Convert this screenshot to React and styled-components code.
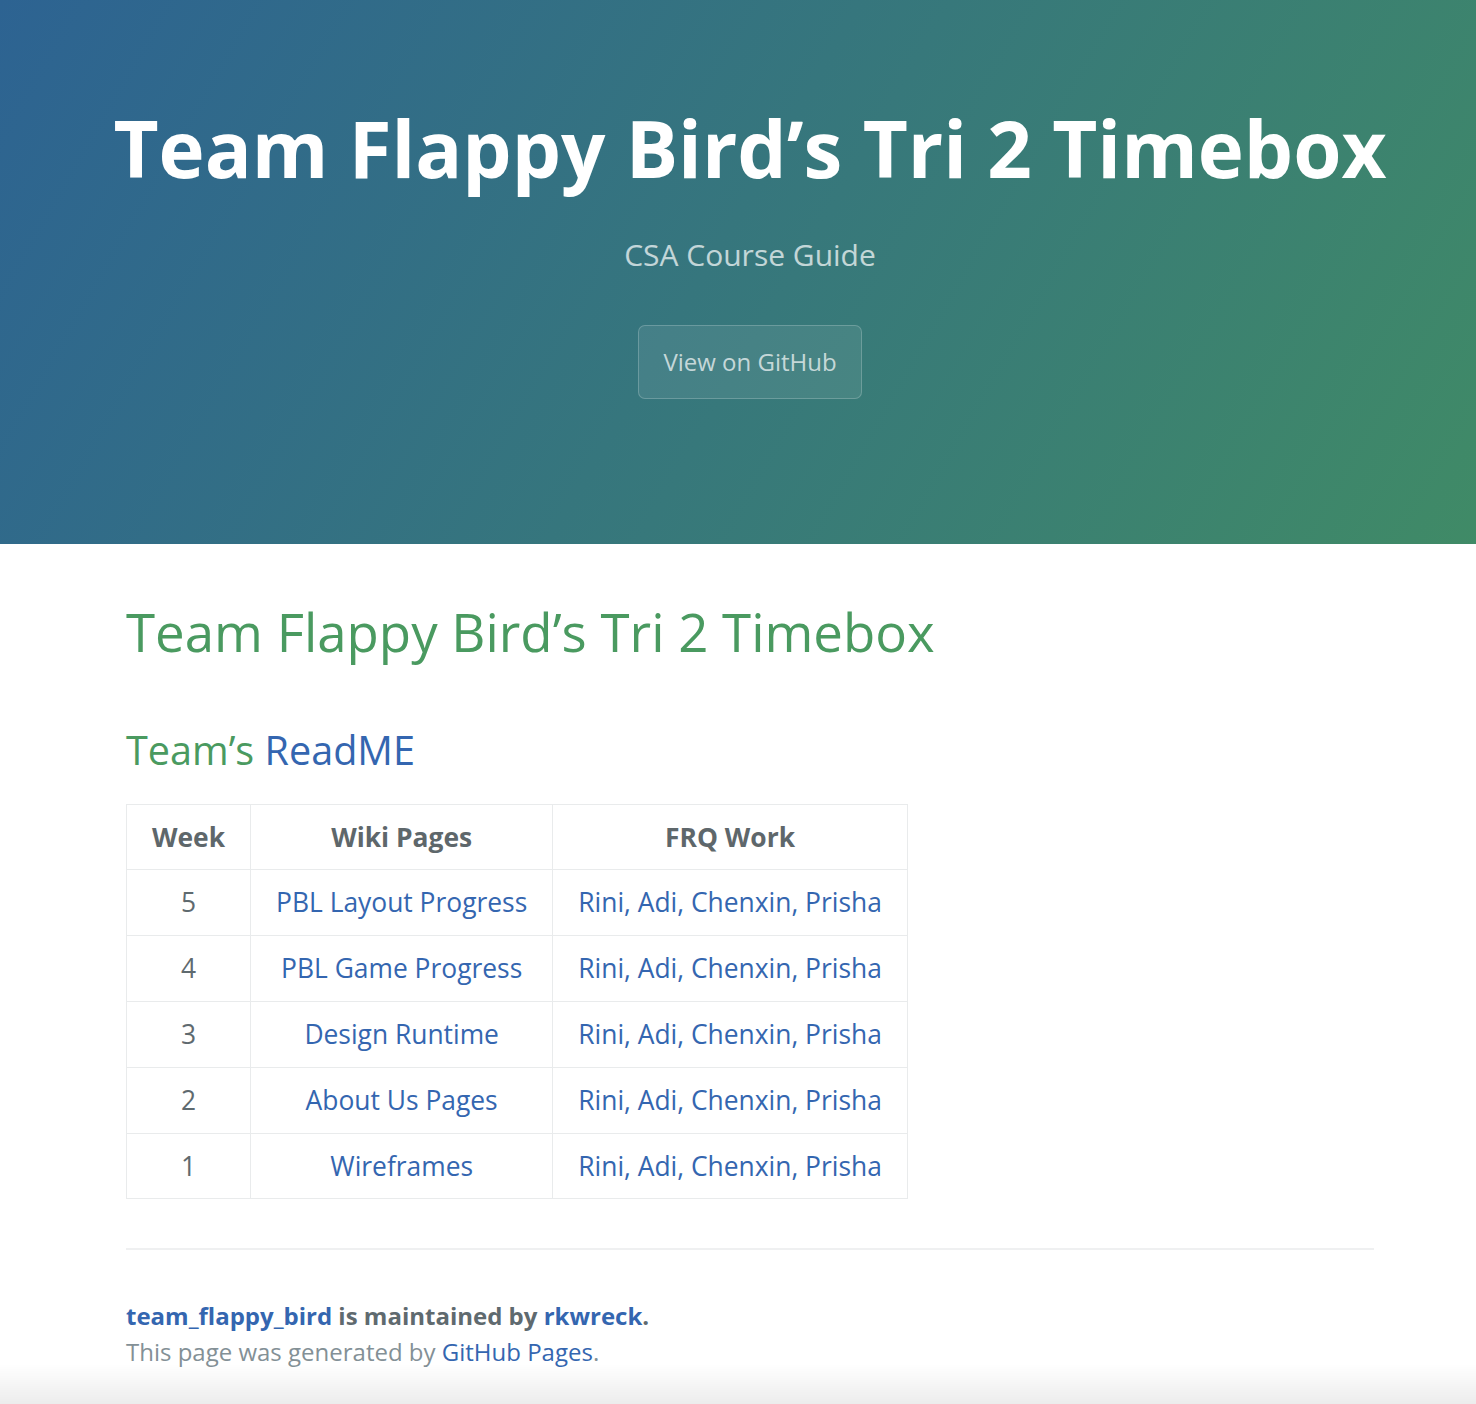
import styled, { createGlobalStyle } from "styled-components";

const GlobalStyle = createGlobalStyle`
  html, body {
    margin: 0;
    padding: 0;
    overflow-x: hidden;
  }
  body {
    font-family: "Open Sans", "Helvetica Neue", Helvetica, Arial, sans-serif;
    line-height: 1.5;
    color: #5f6a6f;
    background: #fff;
  }
`;

const Page = styled.div`
  width: 1500px;
`;

const PageHeader = styled.section`
  color: #fff;
  text-align: center;
  background: linear-gradient(120deg, #2d6392, #408b66);
  padding: 90px 24px 121px;
`;

const ProjectName = styled.h1`
  font-size: 78px;
  font-weight: 700;
  line-height: 1.5;
  margin: 0 0 2px;
`;

const Tagline = styled.h2`
  font-size: 30px;
  font-weight: 400;
  line-height: 1.5;
  opacity: 0.7;
  margin: 25px 0 48px;
`;

const HeaderButton = styled.a`
  display: inline-block;
  margin-bottom: 24px;
  color: rgba(255, 255, 255, 0.7);
  background-color: rgba(255, 255, 255, 0.08);
  border: 1px solid rgba(255, 255, 255, 0.2);
  border-radius: 7px;
  padding: 18px 24px;
  font-size: 24px;
  line-height: 1.5;
  text-decoration: none;
`;

const MainContent = styled.section`
  padding: 48px 126px;
  font-size: 26.4px;
  word-wrap: break-word;
`;

const Heading = styled.h1`
  color: #4a9a60;
  font-weight: 400;
  font-size: ${(p) => p.$size};
  line-height: 1.5;
  margin: ${(p) => p.$top} 0 ${(p) => p.$bottom};
`;

const Link = styled.a`
  color: #3466b0;
  text-decoration: none;
`;

const Table = styled.table`
  display: block;
  width: 100%;
  overflow: auto;
  border-collapse: collapse;
  border-spacing: 0;
  margin-bottom: 24px;
  line-height: 40.8px;
`;

const Th = styled.th`
  font-weight: 700;
  text-align: center;
  padding: 12px 25px;
  border: 1px solid #e9ebec;
  color: #5e676b;
`;

const Td = styled.td`
  text-align: center;
  padding: 12px 25px;
  border: 1px solid #e9ebec;
`;

const Footer = styled.footer`
  padding-top: 48px;
  margin-top: 49px;
  border-top: 2px solid #eff0f1;
  font-size: 24px;
`;

const Owner = styled.span`
  display: block;
  font-weight: 700;
`;

const Credits = styled.span`
  color: #839096;
`;

const BottomShade = styled.div`
  position: fixed;
  left: 0;
  right: 0;
  bottom: 0;
  height: 40px;
  pointer-events: none;
  background: linear-gradient(to bottom, rgba(0, 0, 0, 0), rgba(0, 0, 0, 0.075));
`;

const rows = [
  { week: 5, page: "PBL Layout Progress" },
  { week: 4, page: "PBL Game Progress" },
  { week: 3, page: "Design Runtime" },
  { week: 2, page: "About Us Pages" },
  { week: 1, page: "Wireframes" },
];

const names = ["Rini", "Adi", "Chenxin", "Prisha"];

const App = () => {
  return (
    <Page>
      <GlobalStyle />
      <PageHeader>
        <ProjectName>Team Flappy Bird’s Tri 2 Timebox</ProjectName>
        <Tagline>CSA Course Guide</Tagline>
        <HeaderButton href="#">View on GitHub</HeaderButton>
      </PageHeader>
      <MainContent>
        <Heading $size="52.8px" $top="0" $bottom="24px">
          Team Flappy Bird’s Tri 2 Timebox
        </Heading>
        <Heading as="h2" $size="39.6px" $top="50px" $bottom="23px">
          Team’s <Link href="#">ReadME</Link>
        </Heading>
        <Table>
          <thead>
            <tr>
              <Th>Week</Th>
              <Th>Wiki Pages</Th>
              <Th>FRQ Work</Th>
            </tr>
          </thead>
          <tbody>
            {rows.map((row) => (
              <tr key={row.week}>
                <Td>{row.week}</Td>
                <Td>
                  <Link href="#">{row.page}</Link>
                </Td>
                <Td>
                  {names.map((n, i) => (
                    <Link key={n} href="#">
                      {n}
                      {i < names.length - 1 ? ", " : ""}
                    </Link>
                  ))}
                </Td>
              </tr>
            ))}
          </tbody>
        </Table>
        <Footer>
          <Owner>
            <Link href="#">team_flappy_bird</Link> is maintained by{" "}
            <Link href="#">rkwreck</Link>.
          </Owner>
          <Credits>
            This page was generated by <Link href="#">GitHub Pages</Link>.
          </Credits>
        </Footer>
      </MainContent>
      <BottomShade />
    </Page>
  );
};

export default App;
